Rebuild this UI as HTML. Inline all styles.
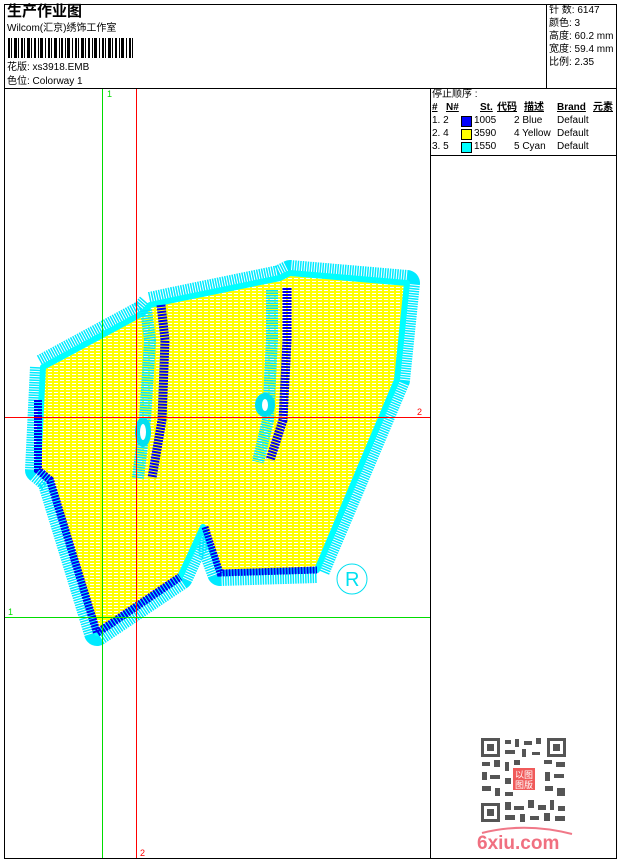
<!DOCTYPE html>
<html><head><meta charset="utf-8"><style>
body{margin:0;background:#fff;width:620px;height:860px;position:relative;overflow:hidden;font-family:"Liberation Sans","Noto Sans CJK SC",sans-serif;font-size:10px;color:#000}
.a{position:absolute;white-space:nowrap;line-height:12px}
.ln{position:absolute;background:#000}
</style></head><body>
<div class="ln" style="left:4px;top:4px;width:613px;height:1px"></div>
<div class="ln" style="left:4px;top:4px;width:1px;height:855px"></div>
<div class="ln" style="left:616px;top:4px;width:1px;height:855px"></div>
<div class="ln" style="left:4px;top:858px;width:613px;height:1px"></div>
<div class="ln" style="left:4px;top:88px;width:613px;height:1px"></div>
<div class="ln" style="left:546px;top:4px;width:1px;height:84px"></div>
<div class="ln" style="left:430px;top:88px;width:1px;height:771px"></div>
<div class="ln" style="left:430px;top:155px;width:187px;height:1px"></div>

<div class="a" style="left:7px;top:3px;font-size:15px;font-weight:bold;line-height:17px">生产作业图</div>
<div class="a" style="left:7px;top:23px">Wilcom(汇京)绣饰工作室</div>
<svg style="position:absolute;left:8px;top:38px" width="126" height="20">
<g fill="#000">
<rect x="0" y="0" width="2" height="20"/><rect x="3" y="0" width="1" height="20"/><rect x="6" y="0" width="3" height="20"/><rect x="10" y="0" width="1" height="20"/><rect x="13" y="0" width="2" height="20"/><rect x="16" y="0" width="1" height="20"/><rect x="19" y="0" width="3" height="20"/><rect x="23" y="0" width="1" height="20"/><rect x="26" y="0" width="2" height="20"/><rect x="30" y="0" width="1" height="20"/><rect x="32" y="0" width="3" height="20"/><rect x="37" y="0" width="1" height="20"/><rect x="40" y="0" width="2" height="20"/><rect x="43" y="0" width="1" height="20"/><rect x="46" y="0" width="3" height="20"/><rect x="51" y="0" width="1" height="20"/><rect x="53" y="0" width="2" height="20"/><rect x="57" y="0" width="1" height="20"/><rect x="59" y="0" width="3" height="20"/><rect x="64" y="0" width="1" height="20"/><rect x="67" y="0" width="2" height="20"/><rect x="70" y="0" width="1" height="20"/><rect x="73" y="0" width="3" height="20"/><rect x="77" y="0" width="1" height="20"/><rect x="80" y="0" width="2" height="20"/><rect x="84" y="0" width="1" height="20"/><rect x="86" y="0" width="3" height="20"/><rect x="91" y="0" width="1" height="20"/><rect x="94" y="0" width="2" height="20"/><rect x="97" y="0" width="1" height="20"/><rect x="100" y="0" width="3" height="20"/><rect x="104" y="0" width="1" height="20"/><rect x="107" y="0" width="2" height="20"/><rect x="111" y="0" width="1" height="20"/><rect x="113" y="0" width="3" height="20"/><rect x="118" y="0" width="1" height="20"/><rect x="121" y="0" width="2" height="20"/><rect x="124" y="0" width="1" height="20"/>
</g></svg>
<div class="a" style="left:7px;top:62px">花版: xs3918.EMB</div>
<div class="a" style="left:7px;top:76px">色位: Colorway 1</div>

<div class="a" style="left:549px;top:5px">针 数: 6147</div>
<div class="a" style="left:549px;top:18px">颜色: 3</div>
<div class="a" style="left:549px;top:31px">高度: 60.2 mm</div>
<div class="a" style="left:549px;top:44px">宽度: 59.4 mm</div>
<div class="a" style="left:549px;top:57px">比例: 2.35</div>

<div class="a" style="left:432px;top:89px">停止顺序 :</div>
<div class="a" style="left:432px;top:102px;font-weight:bold;text-decoration:underline">#</div>
<div class="a" style="left:446px;top:102px;font-weight:bold;text-decoration:underline">N#</div>
<div class="a" style="left:480px;top:102px;font-weight:bold;text-decoration:underline">St.</div>
<div class="a" style="left:497px;top:102px;font-weight:bold;text-decoration:underline">代码</div>
<div class="a" style="left:524px;top:102px;font-weight:bold;text-decoration:underline">描述</div>
<div class="a" style="left:557px;top:102px;font-weight:bold;text-decoration:underline">Brand</div>
<div class="a" style="left:593px;top:102px;font-weight:bold;text-decoration:underline">元素</div>

<div class="a" style="left:432px;top:115px">1. 2</div><div style="position:absolute;left:461px;top:116px;width:9px;height:9px;background:#0000ff;border:1px solid #000"></div><div class="a" style="left:474px;top:115px">1005</div><div class="a" style="left:514px;top:115px">2 Blue</div><div class="a" style="left:557px;top:115px">Default</div>
<div class="a" style="left:432px;top:128px">2. 4</div><div style="position:absolute;left:461px;top:129px;width:9px;height:9px;background:#ffff00;border:1px solid #000"></div><div class="a" style="left:474px;top:128px">3590</div><div class="a" style="left:514px;top:128px">4 Yellow</div><div class="a" style="left:557px;top:128px">Default</div>
<div class="a" style="left:432px;top:141px">3. 5</div><div style="position:absolute;left:461px;top:142px;width:9px;height:9px;background:#00ffff;border:1px solid #000"></div><div class="a" style="left:474px;top:141px">1550</div><div class="a" style="left:514px;top:141px">5 Cyan</div><div class="a" style="left:557px;top:141px">Default</div>

<svg style="position:absolute;left:0;top:0" width="620" height="860">
<defs>
<pattern id="yp" width="6" height="3" patternUnits="userSpaceOnUse"><rect width="6" height="3" fill="#ffff00"/><rect y="2" width="4" height="1" fill="#fff"/></pattern>
</defs>
<polygon points="43,367 143,313 150,305 173,300 280,278 290,273 407,283 397,380 317,570 220,573 203,527 180,577 97,633 50,480 38,470" fill="none" stroke="#00eaff" stroke-width="26" stroke-linejoin="round" stroke-dasharray="1.5 1"/>
<polygon points="43,367 143,313 150,305 173,300 280,278 290,273 407,283 397,380 317,570 220,573 203,527 180,577 97,633 50,480 38,470" fill="url(#yp)" stroke="#00ffff" stroke-width="6" stroke-linejoin="round"/>
<polyline points="38,400 38,470 50,480 97,633 180,577" fill="none" stroke="#0000ee" stroke-width="8" stroke-dasharray="2 1"/>
<polyline points="205,527 220,573 317,570" fill="none" stroke="#0000ee" stroke-width="7" stroke-dasharray="2 1"/>
<path d="M146,310 L150,340 L145,420 L138,478" stroke="#00e8ff" stroke-width="12" fill="none" stroke-dasharray="1.5 1"/>
<path d="M161,305 L165,340 L162,420 L152,478" stroke="#0000ee" stroke-width="9" fill="none" stroke-dasharray="2 1"/>
<path d="M272,290 L272,340 L268,420 L258,462" stroke="#00e8ff" stroke-width="12" fill="none" stroke-dasharray="1.5 1"/>
<path d="M287,288 L287,340 L283,420 L270,460" stroke="#0000ee" stroke-width="9" fill="none" stroke-dasharray="2 1"/>
<ellipse cx="143" cy="432" rx="8" ry="15" fill="#00e0f0"/><ellipse cx="143" cy="432" rx="3" ry="8" fill="#fff"/>
<ellipse cx="265" cy="405" rx="10" ry="12" fill="#00e0f0"/><ellipse cx="265" cy="405" rx="3" ry="6" fill="#fff"/>
<circle cx="352" cy="579" r="15" fill="none" stroke="#00e0f0" stroke-width="1"/>
<text x="345" y="586" font-size="20" fill="#00e0f0" font-family="Liberation Sans">R</text>
<rect x="102" y="89" width="1" height="769" fill="#00dd00"/>
<rect x="136" y="89" width="1" height="769" fill="#ff0000"/>
<rect x="5" y="417" width="425" height="1" fill="#ff0000"/>
<rect x="5" y="617" width="425" height="1" fill="#00dd00"/>
<text x="107" y="97" font-size="9" fill="#00dd00">1</text>
<text x="417" y="415" font-size="9" fill="#ff0000">2</text>
<text x="8" y="615" font-size="9" fill="#00dd00">1</text>
<text x="140" y="856" font-size="9" fill="#ff0000">2</text>
<g fill="#555">
<rect x="481" y="738" width="85" height="84" fill="#fff"/>
<rect x="481" y="738" width="19" height="19"/><rect x="484" y="741" width="13" height="13" fill="#fff"/><rect x="487" y="744" width="7" height="7"/>
<rect x="547" y="738" width="19" height="19"/><rect x="550" y="741" width="13" height="13" fill="#fff"/><rect x="553" y="744" width="7" height="7"/>
<rect x="481" y="803" width="19" height="19"/><rect x="484" y="806" width="13" height="13" fill="#fff"/><rect x="487" y="809" width="7" height="7"/>
<rect x="505" y="740" width="6" height="4"/><rect x="515" y="739" width="4" height="8"/><rect x="524" y="741" width="8" height="4"/><rect x="536" y="738" width="5" height="6"/><rect x="505" y="750" width="10" height="4"/><rect x="522" y="749" width="4" height="8"/><rect x="532" y="752" width="8" height="3"/>
<rect x="482" y="762" width="8" height="4"/><rect x="494" y="760" width="6" height="7"/><rect x="505" y="762" width="4" height="9"/><rect x="514" y="760" width="6" height="5"/><rect x="544" y="760" width="8" height="4"/><rect x="556" y="762" width="9" height="5"/>
<rect x="482" y="772" width="5" height="8"/><rect x="490" y="775" width="10" height="4"/><rect x="505" y="778" width="6" height="6"/><rect x="545" y="772" width="5" height="9"/><rect x="554" y="774" width="10" height="4"/>
<rect x="482" y="786" width="9" height="5"/><rect x="495" y="788" width="5" height="8"/><rect x="505" y="792" width="8" height="4"/><rect x="545" y="786" width="8" height="5"/><rect x="557" y="788" width="8" height="8"/>
<rect x="505" y="802" width="6" height="8"/><rect x="514" y="806" width="10" height="4"/><rect x="528" y="800" width="6" height="8"/><rect x="538" y="805" width="8" height="5"/><rect x="550" y="800" width="4" height="10"/><rect x="558" y="806" width="7" height="5"/>
<rect x="505" y="815" width="10" height="5"/><rect x="520" y="814" width="5" height="8"/><rect x="530" y="816" width="9" height="4"/><rect x="544" y="813" width="6" height="8"/><rect x="555" y="816" width="10" height="5"/>
</g>
<rect x="513" y="768" width="22" height="22" fill="#f05a5a"/>
<text x="515" y="778" font-size="9" fill="#fff" font-family="Noto Sans CJK SC">以</text><text x="524" y="778" font-size="9" fill="#fff" font-family="Noto Sans CJK SC">图</text>
<text x="515" y="788" font-size="9" fill="#fff" font-family="Noto Sans CJK SC">图</text><text x="524" y="788" font-size="9" fill="#fff" font-family="Noto Sans CJK SC">版</text>
<path d="M482,833 Q525,822 572,834" stroke="#f07888" stroke-width="2" fill="none"/>
<text x="477" y="849" font-size="19" font-weight="bold" fill="#f07080" font-family="Liberation Sans">6xiu.com</text>
</svg>
</body></html>
